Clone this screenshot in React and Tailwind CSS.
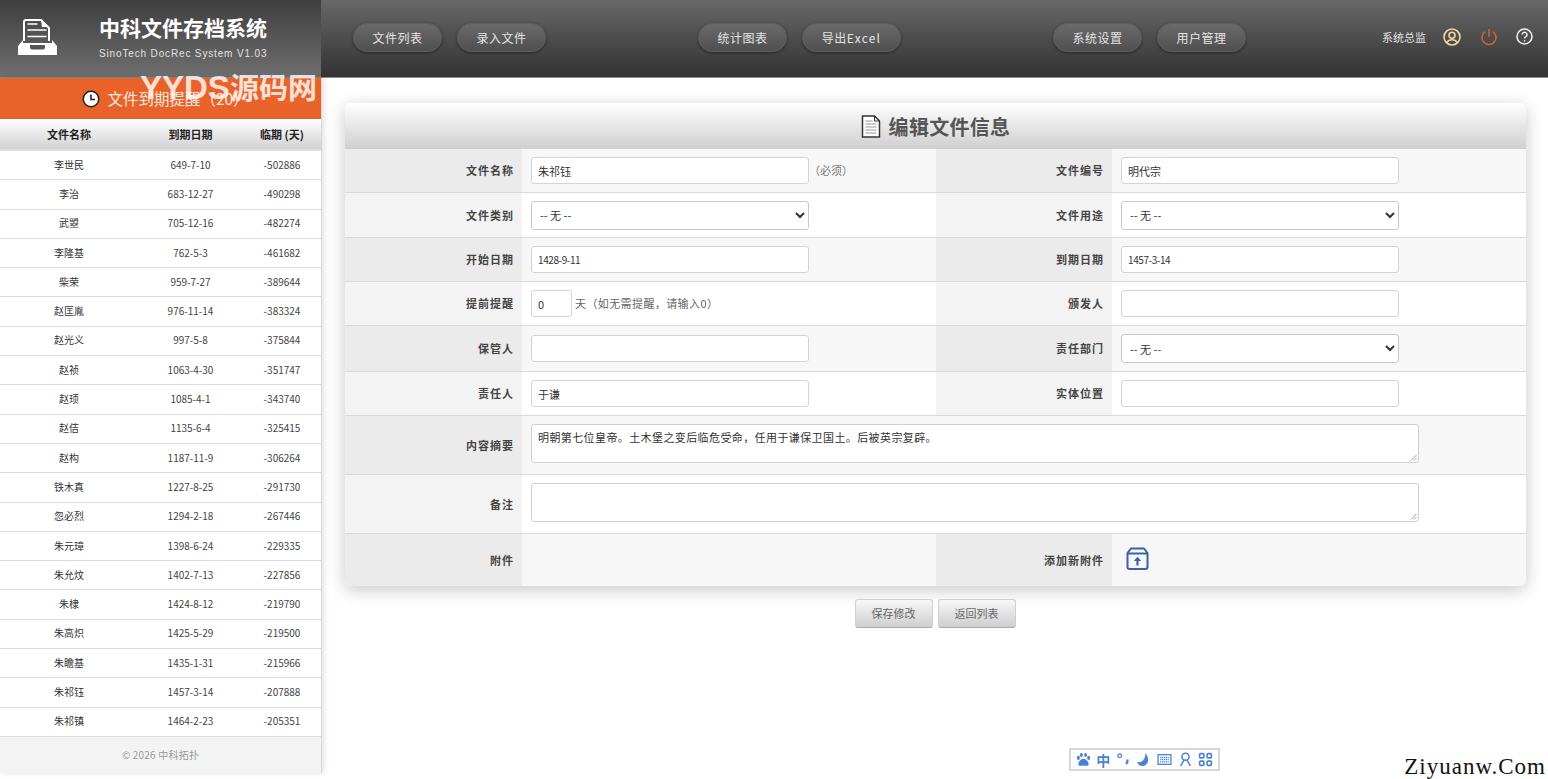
import React from 'react';

const reminders = [
    ['李世民', '649-7-10', '-502886'],
    ['李治', '683-12-27', '-490298'],
    ['武曌', '705-12-16', '-482274'],
    ['李隆基', '762-5-3', '-461682'],
    ['柴荣', '959-7-27', '-389644'],
    ['赵匡胤', '976-11-14', '-383324'],
    ['赵光义', '997-5-8', '-375844'],
    ['赵祯', '1063-4-30', '-351747'],
    ['赵顼', '1085-4-1', '-343740'],
    ['赵佶', '1135-6-4', '-325415'],
    ['赵构', '1187-11-9', '-306264'],
    ['铁木真', '1227-8-25', '-291730'],
    ['忽必烈', '1294-2-18', '-267446'],
    ['朱元璋', '1398-6-24', '-229335'],
    ['朱允炆', '1402-7-13', '-227856'],
    ['朱棣', '1424-8-12', '-219790'],
    ['朱高炽', '1425-5-29', '-219500'],
    ['朱瞻基', '1435-1-31', '-215966'],
    ['朱祁钰', '1457-3-14', '-207888'],
    ['朱祁镇', '1464-2-23', '-205351'],
];

const NavButton = ({ children, className = 'w-[89px]' }) => (
    <button className={`${className} h-[29px] rounded-full bg-gradient-to-b from-[#6a6a6a] to-[#4f4f4f] border border-[#5e5e5e] shadow-[0_1px_3px_rgba(0,0,0,0.45)] text-[12px] tracking-[0.5px] text-[#e4e4e4]`}>
        {children}
    </button>
);

const TextInput = ({ value = '', className = 'w-[278px] text-[11px]' }) => (
    <input
        readOnly
        value={value}
        className={`${className} h-[27px] px-[6px] bg-white border border-[#d4d4d4] rounded-[3px] text-[#333] outline-none`}
    />
);

const SelectBox = () => (
    <select className="w-[278px] h-[29px] px-[4px] bg-white border border-[#c8c8c8] rounded-[3px] text-[11px] text-[#333] outline-none">
        <option>-- 无 --</option>
    </select>
);

const Label = ({ children, even, className = 'w-[177px]' }) => (
    <div className={`${className} shrink-0 pr-[8px] flex items-center justify-end text-[11px] font-semibold tracking-[1px] text-[#444] ${even ? 'bg-[#f3f3f3]' : 'bg-[#ebebeb]'}`}>
        {children}
    </div>
);

const FormRow = ({ height, even, children }) => (
    <div className={`flex border-b border-[#d9d9d9] ${height} ${even ? 'bg-white' : 'bg-[#f7f7f7]'}`}>
        {children}
    </div>
);

const Field = ({ children, className = 'w-[414px]' }) => (
    <div className={`${className} pl-[9px] flex items-center text-[11px] text-[#666]`}>{children}</div>
);

const Textarea = ({ value = '' }) => (
    <div className="relative w-[888px] h-[39px] -mt-[4px] px-[6px] py-[4px] bg-white border border-[#d0d0d0] rounded-[3px] text-[11px] tracking-[0.4px] text-[#333]">
        {value}
        <svg className="absolute right-[1px] bottom-[1px] w-[7px] h-[7px]" viewBox="0 0 7 7">
            <path d="M6.5 1 1 6.5M6.5 4 4 6.5" stroke="#888" strokeWidth="0.8" />
        </svg>
    </div>
);

const App = () => {
    return (
        <div className='relative w-[1548px] h-[779px] overflow-hidden bg-white font-["Noto_Sans_CJK_SC","Liberation_Sans",sans-serif]'>
            {/* Top bar */}
            <header className="flex h-[78px] border-b border-[#8a8a8a]">
                <div className="w-[321px] shrink-0 flex bg-gradient-to-b from-[#3f3f3f] to-[#6f6f6f]">
                    <svg className="ml-[18px] mt-[19px] w-[39px] h-[38px] shrink-0" viewBox="0 0 39 38">
                        <path d="M6 22V3a2 2 0 0 1 2-2h15l8 8v13" fill="none" stroke="#fff" strokeWidth="2" />
                        <path d="M23 1l1 7h7z" fill="#fff" />
                        <path d="M9.5 5h10M9.5 11h19M9.5 17.5h19" stroke="#fff" strokeWidth="1.6" />
                        <path d="M5 21v3h29v-3l5 6v9H0v-9z" fill="#fff" />
                        <path d="M12 26h15v2.500a2 2 0 0 1-2 2H14a2 2 0 0 1-2-2z" fill="#555" />
                    </svg>
                    <div className="ml-[42px] pt-[13px]">
                        <div className="text-[21px] leading-[28px] font-bold text-white">中科文件存档系统</div>
                        <div className="mt-[6px] text-[10px] leading-[14px] tracking-[0.85px] text-[#e2e2e2] font-['Liberation_Sans',sans-serif]">SinoTech DocRec System V1.03</div>
                    </div>
                </div>
                <nav className="flex-1 flex items-start pt-[23px] pl-[32px] bg-gradient-to-b from-[#686868] to-[#333]">
                    <div className="flex gap-[15px]">
                        <NavButton>文件列表</NavButton>
                        <NavButton>录入文件</NavButton>
                    </div>
                    <div className="flex gap-[15px] ml-[152px]">
                        <NavButton>统计图表</NavButton>
                        <NavButton className="w-[99px]">导出<span className="tracking-[1.2px]">Excel</span></NavButton>
                    </div>
                    <div className="flex gap-[15px] ml-[152px]">
                        <NavButton>系统设置</NavButton>
                        <NavButton>用户管理</NavButton>
                    </div>
                    <div className="flex items-center ml-[136px] h-[27px]">
                        <span className="text-[11px] text-[#e0e0e0] mt-[2px] w-[44px] whitespace-nowrap">系统总监</span>
                        <svg className="ml-[17px] w-[18px] h-[18px]" viewBox="0 0 18 18" fill="none" stroke="#efd9a6" strokeWidth="1.6">
                            <circle cx="9" cy="9" r="8" />
                            <circle cx="9" cy="7.2" r="3" />
                            <path d="M3.8 14.5c1.2-2 3-2.800 5.200-2.800s4 .8 5.200 2.800" />
                        </svg>
                        <svg className="ml-[20px] w-[16px] h-[18px]" viewBox="0 0 16 18" fill="none" stroke="#d2672d" strokeWidth="1.5">
                            <path d="M8 1v7.500" />
                            <path d="M4.300 3.600a7 7 0 1 0 7.400 0" />
                        </svg>
                        <svg className="ml-[19px] w-[17px] h-[17px]" viewBox="0 0 17 17" fill="none" stroke="#f2f2f2" strokeWidth="1.5">
                            <circle cx="8.500" cy="8.500" r="7.500" />
                            <path d="M6.200 6.600a2.400 2.400 0 1 1 3.600 2.100c-.8.500-1.300 1-1.300 1.900" />
                            <path d="M8.500 12.200v1.300" />
                        </svg>
                    </div>
                </nav>
            </header>

            <div className="flex items-start">
                {/* Expiry reminder sidebar */}
                <aside className="w-[322px] shrink-0 h-[695px] bg-white border-r border-[#d8d8d8] shadow-[2px_0_6px_rgba(0,0,0,0.12)]">
                    <div className="h-[41px] flex items-center justify-center gap-[7px] pl-[10px] bg-[#e9622a] text-[15.5px] text-[#fbe9df]">
                        <svg className="w-[18px] h-[18px]" viewBox="0 0 18 18">
                            <circle cx="9" cy="9" r="8.500" fill="#222" />
                            <circle cx="9" cy="9" r="7" fill="#fff" />
                            <path d="M9 4.500V9.500H13" fill="none" stroke="#222" strokeWidth="1.600" />
                        </svg>
                        <span>文件到期提醒（20）</span>
                    </div>
                    <div className="flex h-[32px] items-center bg-gradient-to-b from-white to-[#d2d2d2] border-b-[2px] border-[#dedede] text-[11px] font-semibold text-[#222]">
                        <div className="w-[138px] text-center">文件名称</div>
                        <div className="w-[105px] text-center">到期日期</div>
                        <div className="w-[78px] text-center">临期 (天)</div>
                    </div>
                    {reminders.map(([name, date, days]) => (
                        <div key={name} className="flex h-[29.3px] items-center pb-[2px] border-b border-[#dcdcdc] text-[10px] text-[#333]">
                            <div className="w-[138px] text-center">{name}</div>
                            <div className="w-[105px] text-center text-[#444]">{date}</div>
                            <div className="w-[78px] text-center text-[#444]">{days}</div>
                        </div>
                    ))}
                    <div className="h-[36px] flex items-center justify-center bg-[#f3f3f3] text-[10px] tracking-[0.2px] text-[#999]">© 2026 中科拓扑</div>
                </aside>

                <main className="flex-1 pl-[23px] pt-[25px]">
                    <section className="w-[1181px] rounded-[6px] overflow-hidden shadow-[0_4px_18px_rgba(0,0,0,0.22)]">
                        <div className="h-[46px] flex items-center justify-center gap-[8px] bg-gradient-to-b from-white to-[#cfcfcf]">
                            <svg className="w-[20px] h-[23px]" viewBox="0 0 20 23" fill="none" stroke="#333" strokeWidth="1.500">
                                <path d="M1.500 1h12l5 5v16h-17z" fill="#fff" />
                                <path d="M13.500 1v5h5" strokeWidth="1" />
                                <path d="M4.500 6h7M4.500 9h11M4.500 12h11M4.500 15h11M4.500 18h11" stroke="#999" strokeWidth="1" />
                            </svg>
                            <h1 className="pt-[1px] text-[20px] tracking-[0.3px] font-bold text-[#555]">编辑文件信息</h1>
                        </div>

                        <FormRow height="h-[44px]">
                            <Label>文件名称</Label>
                            <Field><TextInput value="朱祁钰" /><span className="text-[#777]">（必须）</span></Field>
                            <Label className="w-[176px]">文件编号</Label>
                            <Field><TextInput value="明代宗" /></Field>
                        </FormRow>
                        <FormRow height="h-[45px]" even>
                            <Label even>文件类别</Label>
                            <Field><SelectBox /></Field>
                            <Label even className="w-[176px]">文件用途</Label>
                            <Field><SelectBox /></Field>
                        </FormRow>
                        <FormRow height="h-[44px]">
                            <Label>开始日期</Label>
                            <Field><TextInput value="1428-9-11" className="w-[278px] text-[10px] tracking-[-0.4px]" /></Field>
                            <Label className="w-[176px]">到期日期</Label>
                            <Field><TextInput value="1457-3-14" className="w-[278px] text-[10px] tracking-[-0.4px]" /></Field>
                        </FormRow>
                        <FormRow height="h-[44px]" even>
                            <Label even>提前提醒</Label>
                            <Field>
                                <TextInput value="0" className="w-[41px] text-[11px]" />
                                <span className="ml-[3px] tracking-[0.4px]">天（如无需提醒，请输入0）</span>
                            </Field>
                            <Label even className="w-[176px]">颁发人</Label>
                            <Field><TextInput /></Field>
                        </FormRow>
                        <FormRow height="h-[46px]">
                            <Label>保管人</Label>
                            <Field><TextInput /></Field>
                            <Label className="w-[176px]">责任部门</Label>
                            <Field><SelectBox /></Field>
                        </FormRow>
                        <FormRow height="h-[44px]" even>
                            <Label even>责任人</Label>
                            <Field><TextInput value="于谦" /></Field>
                            <Label even className="w-[176px]">实体位置</Label>
                            <Field><TextInput /></Field>
                        </FormRow>
                        <FormRow height="h-[59px]">
                            <Label>内容摘要</Label>
                            <Field className="flex-1">
                                <Textarea value="明朝第七位皇帝。土木堡之变后临危受命，任用于谦保卫国土。后被英宗复辟。" />
                            </Field>
                        </FormRow>
                        <FormRow height="h-[59px]" even>
                            <Label even>备注</Label>
                            <Field className="flex-1"><Textarea /></Field>
                        </FormRow>
                        <div className="flex h-[52px] bg-[#f7f7f7]">
                            <Label>附件</Label>
                            <Field />
                            <Label className="w-[176px]">添加新附件</Label>
                            <Field className="w-[414px] -mt-[3px]">
                                <svg className="ml-[5px] w-[23px] h-[23px]" viewBox="0 0 23 23" fill="none" stroke="#3b62a8" strokeWidth="2">
                                    <path d="M1.500 6 5 1.500h13L21.500 6v14a2 2 0 0 1-2 2h-16a2 2 0 0 1-2-2z" strokeLinejoin="round" />
                                    <path d="M1.500 6.500h20" />
                                    <path d="M11.500 18.500v-5" strokeWidth="2.200" />
                                    <path d="M7.800 14 11.500 9.800 15.200 14z" fill="#3b62a8" stroke="none" />
                                </svg>
                            </Field>
                        </div>
                    </section>

                    <div className="flex justify-center gap-[5px] mt-[13px] pr-[23px]">
                        <button className="w-[78px] h-[29px] rounded-[3px] border border-[#cfcfcf] border-b-[#aaa] bg-gradient-to-b from-[#f7f7f7] to-[#cfcfcf] text-[11px] text-[#666]">保存修改</button>
                        <button className="w-[78px] h-[29px] rounded-[3px] border border-[#cfcfcf] border-b-[#aaa] bg-gradient-to-b from-[#f7f7f7] to-[#cfcfcf] text-[11px] text-[#666]">返回列表</button>
                    </div>
                </main>
            </div>

            {/* Site watermark over the sidebar */}
            <div className="absolute left-[140px] top-[69px] flex items-baseline leading-[38px] font-bold text-white/80 font-['Liberation_Sans','Noto_Sans_CJK_SC',sans-serif]">
                <span className="text-[33px]">YYDS</span>
                <span className="text-[29px]">源码网</span>
            </div>

            {/* Input method toolbar */}
            <div className="absolute left-[1069px] top-[748px] w-[151px] h-[23px] flex items-center justify-around px-[2px] bg-white border-2 border-[#d6d6d6] text-[#4a80d6]">
                <svg className="w-[15px] h-[15px]" viewBox="0 0 14 14" fill="currentColor">
                    <ellipse cx="2.200" cy="5.500" rx="1.400" ry="1.900" />
                    <ellipse cx="5" cy="2.800" rx="1.400" ry="1.900" />
                    <ellipse cx="9" cy="2.800" rx="1.400" ry="1.900" />
                    <ellipse cx="11.800" cy="5.500" rx="1.400" ry="1.900" />
                    <path d="M7 6.200c2.500 0 4.800 3 4.800 5 0 2-2.300 1.900-4.800 1.300-2.500.6-4.800.7-4.800-1.300 0-2 2.300-5 4.800-5z" />
                </svg>
                <span className="text-[14px] font-bold leading-none">中</span>
                <svg className="w-[15px] h-[15px]" viewBox="0 0 14 14" fill="none" stroke="currentColor" strokeWidth="1.200">
                    <circle cx="3.500" cy="3.500" r="1.700" />
                    <path d="M10.500 7c.5 1.500 0 3-1.300 4" strokeWidth="2" />
                </svg>
                <svg className="w-[15px] h-[15px]" viewBox="0 0 14 14" fill="currentColor">
                    <path d="M8.500 1C13 5 12 13 6 13 3.500 13 1.800 11.500 1 9.500c4 1 8.500-3 7.500-8.500z" />
                </svg>
                <svg className="w-[15px] h-[15px]" viewBox="0 0 14 14" fill="none" stroke="currentColor" strokeWidth="1.200">
                    <rect x="1" y="2.500" width="12" height="9" />
                    <path d="M3 5h8M3 7h8M3 9.300h8" strokeDasharray="1.200 0.600" />
                </svg>
                <svg className="w-[15px] h-[15px]" viewBox="0 0 14 14" fill="none" stroke="currentColor" strokeWidth="1.400">
                    <circle cx="7" cy="4.500" r="3.300" />
                    <path d="M5.500 7.500 2.500 13M8.500 7.500l3 5.500" />
                </svg>
                <svg className="w-[15px] h-[15px]" viewBox="0 0 14 14" fill="none" stroke="currentColor" strokeWidth="1.500">
                    <rect x="1.500" y="1.500" width="4" height="4" rx="1" />
                    <rect x="8.500" y="1.500" width="4" height="4" rx="1" />
                    <rect x="1.500" y="8.500" width="4" height="4" rx="1" />
                    <rect x="8.500" y="8.500" width="4" height="4" rx="1" />
                </svg>
            </div>

            <div className="absolute right-[2px] bottom-[-1px] text-[23px] leading-[27px] tracking-[1px] text-[#111] font-['Liberation_Serif',serif]">Ziyuanw.Com</div>
        </div>
    );
};

export default App;
